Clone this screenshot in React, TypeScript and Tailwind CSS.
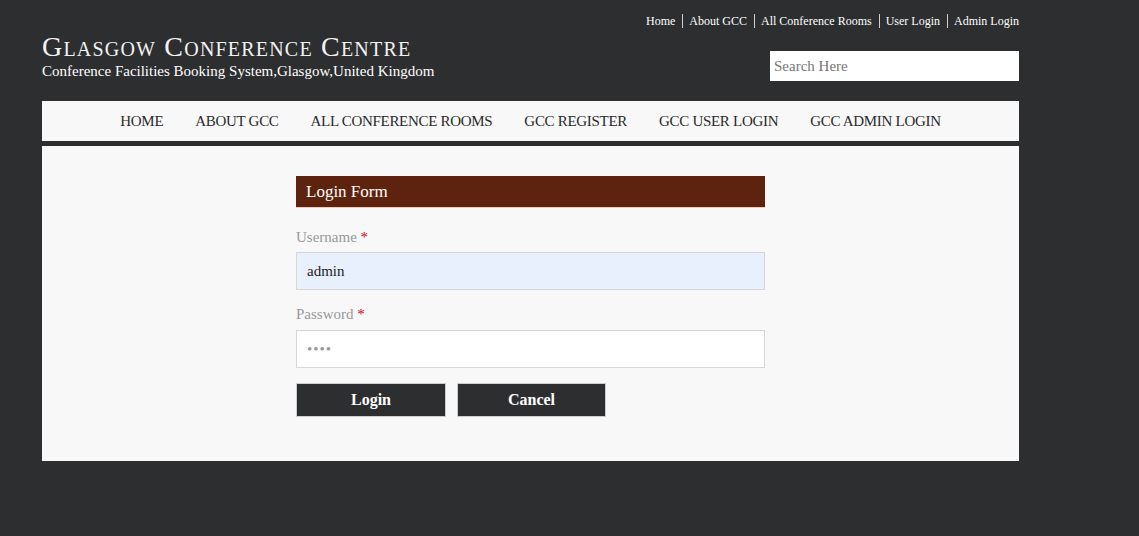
import { useState } from 'react'

const TOP_LINKS = ['Home', 'About GCC', 'All Conference Rooms', 'User Login', 'Admin Login']
const NAV_LINKS = ['HOME', 'ABOUT GCC', 'ALL CONFERENCE ROOMS', 'GCC REGISTER', 'GCC USER LOGIN', 'GCC ADMIN LOGIN']

const serif = "font-['Liberation_Serif','Times_New_Roman',serif]"
const inputClass =
  'block h-[38px] w-full border border-[#d6d6d6] px-[10px] text-[15px] text-[#222] outline-none'

export default function App() {
  const [username, setUsername] = useState('admin')
  const [password, setPassword] = useState('1234')

  return (
    <div className={`min-h-[536px] bg-[#2d2e30] ${serif}`}>
      <div className="mx-[42px] w-[977px] pt-[13px]">
        {/* header */}
        <div className="flex items-start justify-between">
          <div className="pt-[20px]">
            <h1 className="text-[28px] leading-[28px] tracking-[1.2px] text-[#f2f2f2] [font-variant:small-caps]">
              Glasgow Conference Centre
            </h1>
            <p className="mt-[1px] text-[15px] leading-[18px] text-white">
              Conference Facilities Booking System,Glasgow,United Kingdom
            </p>
          </div>
          <div className="flex flex-col items-end">
            <ul className="flex pt-[1px] text-[12px] leading-[14px] text-white">
              {TOP_LINKS.map((l, i) => (
                <li
                  key={l}
                  className={i === 0 ? 'pr-[7px]' : 'border-l border-[#cfcfcf] pl-[6px] pr-[7px] last:pr-0'}
                >
                  {l}
                </li>
              ))}
            </ul>
            <input
              className="mt-[23px] h-[30px] w-[249px] bg-white px-[4px] text-[15px] text-[#333] outline-none placeholder:text-[#777]"
              placeholder="Search Here"
            />
          </div>
        </div>

        {/* nav */}
        <nav className="mt-[20px] flex h-[40px] items-center justify-center gap-[32px] bg-[#f8f8f8]">
          {NAV_LINKS.map((l) => (
            <span key={l} className="text-[15px] tracking-[-0.3px] text-[#2a2a2a]">
              {l}
            </span>
          ))}
        </nav>

        {/* content */}
        <div className="mt-[5px] h-[315px] bg-[#f8f8f8] pt-[30px]">
          <form className="mx-auto w-[469px]" onSubmit={(e) => e.preventDefault()}>
            <div className="h-[32px] border-b border-[#f3cbb8] bg-[#5e230e] pl-[10px] text-[17px] leading-[31px] text-white">
              Login Form
            </div>

            <label className="mt-[20px] block text-[15px] leading-[18px] text-[#999]">
              Username <span className="text-[#d0021b]">*</span>
            </label>
            <input
              className={`${inputClass} mt-[6px] bg-[#e8f0fe]`}
              value={username}
              onChange={(e) => setUsername(e.target.value)}
            />

            <label className="mt-[15px] block text-[15px] leading-[18px] text-[#999]">
              Password <span className="text-[#d0021b]">*</span>
            </label>
            <input
              type="password"
              className={`${inputClass} mt-[7px] bg-white text-[10px] tracking-[1px] text-[#999]`}
              value={password}
              onChange={(e) => setPassword(e.target.value)}
            />

            <div className="mt-[15px] flex gap-[11px]">
              <button
                type="submit"
                className="h-[34px] w-[150px] border border-[#ccc] bg-[#2d2e30] text-[16px] font-bold text-white"
              >
                Login
              </button>
              <button
                type="button"
                className="h-[34px] w-[149px] border border-[#ccc] bg-[#2d2e30] text-[16px] font-bold text-white"
              >
                Cancel
              </button>
            </div>
          </form>
        </div>
      </div>
    </div>
  )
}
